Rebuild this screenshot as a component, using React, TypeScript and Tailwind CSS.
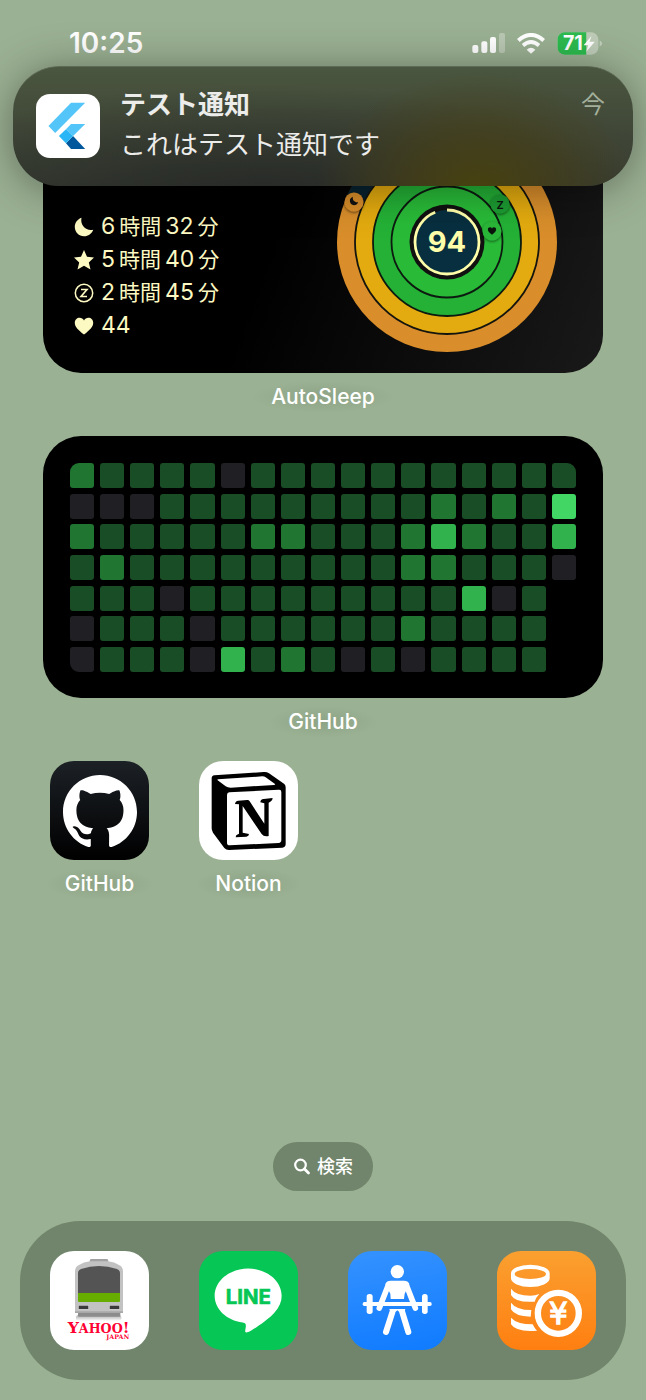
import type { ReactNode } from "react";
import { SiGithub } from "react-icons/si";

const FONT = "font-['Inter','Noto_Sans_CJK_JP',sans-serif]";

const MOON =
  "M7.5 0.8C3.5 2.2 0.8 5.7 0.8 10C0.8 15.1 4.9 19.2 10 19.2C14.3 19.2 17.8 16.7 19.2 12.7C13 14.5 5.8 9 7.5 0.8Z";
const HEART =
  "M10 18.6C4 14 0.8 10.8 0.8 6.8C0.8 3.8 3 1.8 5.6 1.8C7.4 1.8 9.1 2.8 10 4.4C10.9 2.8 12.6 1.8 14.4 1.8C17 1.8 19.2 3.8 19.2 6.8C19.2 10.8 16 14 10 18.6Z";

function StatusBar() {
  return (
    <header className="flex h-[111px] items-start justify-between pt-[27px] pr-[43px] pl-[69px] text-white">
      <time className="text-[28px] leading-8 font-semibold">10:25</time>
      <div className="flex h-8 items-center gap-3">
        <svg viewBox="0 0 99 60" className="h-5 w-[33px]" fill="currentColor" role="img" aria-label="Signal">
          <rect x="1" y="36" width="18" height="24" rx="6" />
          <rect x="28" y="25" width="18" height="35" rx="6" />
          <rect x="54" y="12" width="18" height="48" rx="6" />
          <rect x="81" y="0" width="18" height="60" rx="6" opacity="0.3" />
        </svg>
        <svg viewBox="0 0 84 62" className="h-[21px] w-7" role="img" aria-label="Wi-Fi">
          <path d="M4 22Q42 -11 80 22" fill="none" stroke="currentColor" strokeWidth="12" />
          <path d="M18 37Q42 16 66 37" fill="none" stroke="currentColor" strokeWidth="11" />
          <path d="M29 50Q42 38 55 50L42 62Z" fill="currentColor" />
        </svg>
        <svg viewBox="0 0 138 70" className="h-[23px] w-[46px]" role="img" aria-label="71%">
          <defs>
            <clipPath id="charge">
              <rect x="0" y="0" width="88" height="70" />
            </clipPath>
          </defs>
          <rect x="0" y="1" width="125" height="68" rx="22" fill="#fff" opacity="0.35" />
          <rect x="0" y="1" width="125" height="68" rx="22" fill="#2dbb4f" clipPath="url(#charge)" />
          <path d="M129 26Q136 29 136 35T129 44Z" fill="#fff" opacity="0.4" />
          <text x="17" y="56" fontSize="60" fontWeight="700" fill="#fff">71</text>
          <path d="M104 12L80 40H94L88 60L114 30H98Z" fill="#fff" />
        </svg>
      </div>
    </header>
  );
}

function FlutterIcon() {
  return (
    <svg viewBox="109 283 190 190" className="size-16 shrink-0 rounded-[14px] bg-white" role="img" aria-label="Flutter">
      <path d="M213 309H255L166 399L146 378Z" fill="#54c5f8" />
      <path d="M213 372H255L219 408L198 388Z" fill="#54c5f8" />
      <path d="M198 429L219 408L255 446H213Z" fill="#01579b" />
      <path d="M198 388L219 408L198 429L177 408Z" fill="#29b6f6" />
    </svg>
  );
}

function Notification() {
  return (
    <section
      className="absolute inset-x-[13px] top-[66px] z-10 flex h-[120px] items-center gap-5 rounded-[46px] border-t border-[#5d6a56] bg-[radial-gradient(ellipse_26%_100%_at_75%_105%,#48420e_0%,#463f15aa_45%,#463e1000_100%),radial-gradient(ellipse_62%_95%_at_40%_110%,#202222bb_0%,#20222200_100%),linear-gradient(180deg,#4a563f_0%,#414838_50%,#373c32_100%)] pr-7 pb-[2px] pl-[23px] shadow-[0_4px_44px_rgba(0,0,0,0.38)]"
      aria-label="テスト通知"
    >
      <FlutterIcon />
      <div className="min-w-0 flex-1 pb-[2px] text-[26px] leading-10 text-[#ececea]">
        <h2 className="font-bold">テスト通知</h2>
        <p>これはテスト通知です</p>
      </div>
      <time className="self-start pt-[18px] text-[24px] leading-10 text-[#a3af9b]">今</time>
    </section>
  );
}

function Stat({ icon, parts }: { icon: ReactNode; parts: [string, string?][] }) {
  return (
    <li className="flex h-[33px] items-center gap-[7px]">
      <svg viewBox="0 0 20 20" className="size-5" fill="currentColor" aria-hidden="true">
        {icon}
      </svg>
      <span className="flex items-baseline gap-1">
        {parts.map(([value, unit]) => (
          <span key={value} className="flex items-baseline gap-1">
            <span>{value}</span>
            {unit && <span className="text-[21px]">{unit}</span>}
          </span>
        ))}
      </span>
    </li>
  );
}

function SleepRings() {
  return (
    <svg viewBox="0 0 220 220" className="size-[220px] shrink-0" role="img" aria-label="94">
      <defs>
        <filter id="badge" x="-50%" y="-50%" width="200%" height="200%">
          <feDropShadow dx="0" dy="1" stdDeviation="1.5" floodOpacity="0.6" />
        </filter>
      </defs>
      <circle cx="110" cy="110" r="110" fill="#d98e2b" />
      <path d="M17 70A101 101 0 0 1 110 9" fill="none" stroke="#08232f" strokeWidth="18" />
      <circle cx="110" cy="110" r="92" fill="#e3ab0f" stroke="#14150f" strokeWidth="1.8" />
      <circle cx="110" cy="110" r="74" fill="#24b136" stroke="#0d1a10" strokeWidth="1.8" />
      <circle cx="110" cy="110" r="55.5" fill="#29bb38" stroke="#0d1a10" strokeWidth="1.8" />
      <circle cx="110" cy="110" r="37.5" fill="#111" />
      <circle cx="110" cy="110" r="32" fill="#082f3f" />
      <circle
        cx="110"
        cy="110"
        r="32"
        fill="none"
        stroke="#ffffaa"
        strokeWidth="2.8"
        strokeDasharray="94 100"
        pathLength="100"
        transform="rotate(-90 110 110)"
      />
      <text x="110" y="120" textAnchor="middle" fontSize="29" fontWeight="700" fill="#ffffaa">94</text>
      <g filter="url(#badge)">
        <circle cx="17" cy="70" r="9.5" fill="#d98e2b" />
        <circle cx="163" cy="72" r="9.5" fill="#1f9c30" />
        <circle cx="155" cy="99" r="9.5" fill="#29b638" />
      </g>
      <path d={MOON} transform="translate(12.5 64.5) scale(0.45)" fill="#111" />
      <text x="163" y="77" textAnchor="middle" fontSize="11" fontWeight="600" fill="#0b140c">Z</text>
      <path d={HEART} transform="translate(150.5 94.5) scale(0.45)" fill="#0b140c" />
    </svg>
  );
}

function SleepWidget() {
  return (
    <section className="flex h-[262px] items-end justify-between rounded-[38px] bg-[linear-gradient(110deg,#000_42%,#191919_100%)] pr-[46px] pl-[31px]">
      <ul className="mb-[31px] text-[23px] leading-[33px] text-[#fdf9c2]">
        <Stat icon={<path d={MOON} />} parts={[["6", "時間"], ["32", "分"]]} />
        <Stat
          icon={<path d="M10 0L13 6.8L20 7.5L14.8 12.4L16.5 19.5L10 15.7L3.5 19.5L5.2 12.4L0 7.5L7 6.8Z" />}
          parts={[["5", "時間"], ["40", "分"]]}
        />
        <Stat
          icon={
            <g fill="none" stroke="currentColor">
              <circle cx="10" cy="10" r="8.7" strokeWidth="1.5" />
              <path d="M7 6.5H13L7 13.5H13" strokeWidth="1.6" />
            </g>
          }
          parts={[["2", "時間"], ["45", "分"]]}
        />
        <Stat icon={<path d={HEART} />} parts={[["44"]]} />
      </ul>
      <div className="mb-[21px]">
        <SleepRings />
      </div>
    </section>
  );
}

const CONTRIBUTIONS = [
  "21111011111111111",
  "00011111111121214",
  "21111122111232113",
  "12111111111221110",
  "1110111111111301",
  "0111011111121111",
  "0111031210101111",
];

const LEVELS: Record<string, string> = {
  "0": "bg-[#202024]",
  "1": "bg-[#194d25]",
  "2": "bg-[#207531]",
  "3": "bg-[#32b24d]",
  "4": "bg-[#42d765]",
};

function GithubWidget() {
  return (
    <section className="flex h-[262px] flex-col justify-between rounded-[38px] bg-black px-[27px] pt-[27px] pb-[26px]">
      {CONTRIBUTIONS.map((days, row) => (
        <div key={row} className="grid grid-cols-17 gap-[6px]">
          {days.split("").map((level, col) => {
            const corner =
              col === 0 && row === 0
                ? "rounded-tl-[9px]"
                : col === 0 && row === 6
                  ? "rounded-bl-[9px]"
                  : col === 16 && row === 0
                    ? "rounded-tr-[9px]"
                    : "";
            return <div key={col} className={`h-[25px] rounded-[3px] ${LEVELS[level]} ${corner}`} />;
          })}
        </div>
      ))}
    </section>
  );
}

function Label({ children }: { children: ReactNode }) {
  return (
    <span className="mt-2 block self-center rounded-2xl bg-[radial-gradient(closest-side,rgba(60,80,50,0.14),rgba(60,80,50,0))] px-5 text-center text-[21px] leading-8 font-medium text-white">
      {children}
    </span>
  );
}

function NotionIcon() {
  return (
    <svg viewBox="0 0 297 297" className="size-[99px] rounded-3xl bg-white" aria-hidden="true">
      <path d="M38 52Q38 44 46 43L194 33Q203 32 210 37L256 69Q260 73 260 79V249Q260 259 250 260L90 267Q81 267 76 261L42 215Q38 209 38 202Z" />
      <path d="M57 55L190 46Q196 46 200 49L227 68Q231 72 225 72L95 80Q86 80 80 76L56 58Q54 56 57 55Z" fill="#fff" />
      <path d="M91 94L239 86Q247 85 247 93V237Q247 245 239 246L92 253Q84 253 84 245V102Q84 95 91 94Z" fill="#fff" />
      <path d="M108 129Q109 120 118 119L144 117Q149 116 152 121L196 188V127L184 124Q184 115 194 114L221 111Q221 119 214 122L209 125V225Q194 228 188 219L131 135V215L150 219Q150 226 142 227L110 229Q110 222 117 220L120 218V130Z" />
    </svg>
  );
}

function YahooTransitIcon() {
  return (
    <svg viewBox="0 0 297 297" className="size-[99px] rounded-3xl bg-white" role="img" aria-label="Yahoo! JAPAN">
      <defs>
        <linearGradient id="track" x1="0" y1="0" x2="0" y2="1">
          <stop offset="0" stopColor="#aaa" />
          <stop offset="1" stopColor="#fff" />
        </linearGradient>
      </defs>
      <rect x="78" y="192" width="136" height="18" rx="8" fill="url(#track)" />
      <path d="M123 24H171Q175 24 175 34H119Q119 24 123 24Z" fill="#a2a2a2" />
      <path d="M75 62Q75 47 87 42Q100 33 120 31H174Q194 33 207 42Q219 47 219 62V186H75Z" fill="#c2c2c2" />
      <path d="M84 66Q84 58 93 54Q147 36 201 54Q210 58 210 66V127H84Z" fill="#545454" />
      <path d="M84 126H210V149Q210 153 206 153H88Q84 153 84 149Z" fill="#66ad00" />
      <rect x="84" y="163" width="33" height="12" rx="1" fill="#e2e2e2" />
      <rect x="177" y="163" width="33" height="12" rx="1" fill="#e2e2e2" />
      <rect x="86" y="164" width="29" height="10" fill="#3b3b3b" />
      <rect x="179" y="164" width="29" height="10" fill="#3b3b3b" />
      <path d="M75 181H219V186H75Z" fill="#a8a8a8" />
      <path d="M84 186H211V194Q211 197 207 197H88Q84 197 84 194Z" fill="#8c8c8c" />
      <text x="53" y="245" className="font-['DejaVu_Serif',serif]" fontWeight="700" fill="#ff0033">
        <tspan fontSize="47">Y</tspan>
        <tspan fontSize="38">AHOO</tspan>
        <tspan fontSize="46">!</tspan>
      </text>
      <text x="169" y="264" className="font-['DejaVu_Serif',serif]" fontSize="19" fontWeight="700" fill="#ff0033">
        JAPAN
      </text>
    </svg>
  );
}

function LineIcon() {
  return (
    <svg viewBox="0 0 297 297" className="size-[99px] rounded-3xl bg-[#06c755]" role="img" aria-label="LINE">
      <path
        transform="translate(47 48) scale(8.375)"
        fill="#fff"
        d="M24 10.314C24 4.943 18.615.572 12 .572S0 4.943 0 10.314c0 4.811 4.27 8.842 10.035 9.608.391.082.923.258 1.058.59.12.301.079.766.038 1.08l-.164 1.02c-.045.301-.24 1.186 1.049.645 1.291-.539 6.916-4.078 9.436-6.975C23.176 14.393 24 12.458 24 10.314"
      />
      <text
        x="148"
        y="158"
        textAnchor="middle"
        fontSize="61"
        fontWeight="700"
        fill="#06c755"
        stroke="#06c755"
        strokeWidth="2"
      >
        LINE
      </text>
    </svg>
  );
}

function WorkoutIcon() {
  return (
    <svg
      viewBox="0 0 297 297"
      className="size-[99px] rounded-3xl bg-[linear-gradient(170deg,#3592ff,#0f7bff)]"
      aria-hidden="true"
    >
      <g fill="#fff" stroke="#fff" strokeLinecap="round" strokeLinejoin="round">
        <circle cx="148" cy="62" r="20" stroke="none" />
        <path d="M128 89H168Q180 89 184 99L170 128L168 144H128L127 128L112 99Q116 89 128 89Z" stroke="none" />
        <path d="M121 102L94 171" strokeWidth="17" />
        <path d="M175 102L202 171" strokeWidth="17" />
        <rect x="44" y="153" width="207" height="12" rx="5" stroke="none" />
        <rect x="56" y="129" width="18" height="60" rx="8" stroke="none" />
        <rect x="222" y="129" width="17" height="60" rx="8" stroke="none" />
        <path d="M124 174H172L166 194L148 178L130 194Z" stroke="none" />
        <path d="M133 184L114 243" strokeWidth="18" />
        <path d="M163 184L181 243" strokeWidth="18" />
      </g>
    </svg>
  );
}

function CoinsIcon() {
  return (
    <svg
      viewBox="0 0 297 297"
      className="size-[99px] rounded-3xl bg-[linear-gradient(180deg,#faa030,#ff7f11)]"
      aria-hidden="true"
    >
      <g fill="#fff">
        <path
          fillRule="evenodd"
          d="M42 67A58 26 0 0 1 158 67V82A58 26 0 0 1 42 82ZM53 69A47 15 0 0 0 147 69A47 15 0 0 0 53 69Z"
        />
        <path d="M42 113Q57 134 100 134Q115 134 127 129Q117 139 113 152Q55 156 42 132Z" />
        <path d="M42 155Q58 177 103 177L101 197Q53 196 42 175Z" />
        <path d="M42 200Q60 220 107 220Q112 231 120 239Q57 244 42 220Z" />
      </g>
      <circle cx="184" cy="187" r="61.5" fill="none" stroke="#fff" strokeWidth="19" />
      <text
        x="184"
        y="220"
        className="font-['DejaVu_Sans',sans-serif]"
        textAnchor="middle"
        fontSize="88"
        fill="#fff"
        stroke="#fff"
        strokeWidth="4"
      >
        ¥
      </text>
    </svg>
  );
}

function App({ name, children, showName }: { name: string; children: ReactNode; showName?: boolean }) {
  return (
    <a href="#" className="flex flex-col items-center" aria-label={name}>
      {children}
      {showName && <Label>{name}</Label>}
    </a>
  );
}

export default function HomeScreen() {
  return (
    <div className={`relative flex min-h-screen flex-col bg-[#9bb193] ${FONT}`}>
      <StatusBar />
      <Notification />

      <main className="flex flex-1 flex-col">
        <div className="mx-[43px] flex flex-col pb-[23px]">
          <SleepWidget />
          <Label>AutoSleep</Label>
        </div>
        <div className="mx-[43px] flex flex-col pb-[23px]">
          <GithubWidget />
          <Label>GitHub</Label>
        </div>

        <nav className="grid grid-cols-4 px-[25px]" aria-label="Apps">
          <App name="GitHub" showName>
            <span className="flex size-[99px] items-center justify-center rounded-3xl bg-[linear-gradient(180deg,#1c2126,#000)] text-white">
              <SiGithub className="size-[74px]" />
            </span>
          </App>
          <App name="Notion" showName>
            <NotionIcon />
          </App>
        </nav>

        <button
          type="button"
          className="mx-auto mt-auto mb-[30px] flex h-[49px] items-center gap-[6px] rounded-full bg-[#70856b] px-5 text-[18px] leading-6 font-medium text-white"
        >
          <svg viewBox="0 0 18 18" className="size-[18px]" fill="none" stroke="currentColor" aria-hidden="true">
            <circle cx="7.5" cy="7" r="5.3" strokeWidth="2.2" />
            <path d="M11.5 11L15.5 15" strokeWidth="2.8" strokeLinecap="round" />
          </svg>
          検索
        </button>
      </main>

      <nav className="mx-5 mb-5 grid grid-cols-4 rounded-[60px] bg-[#70856b] px-[5px] py-[30px]" aria-label="Dock">
        <App name="Yahoo! JAPAN">
          <YahooTransitIcon />
        </App>
        <App name="LINE">
          <LineIcon />
        </App>
        <App name="Workout">
          <WorkoutIcon />
        </App>
        <App name="Money">
          <CoinsIcon />
        </App>
      </nav>
    </div>
  );
}
